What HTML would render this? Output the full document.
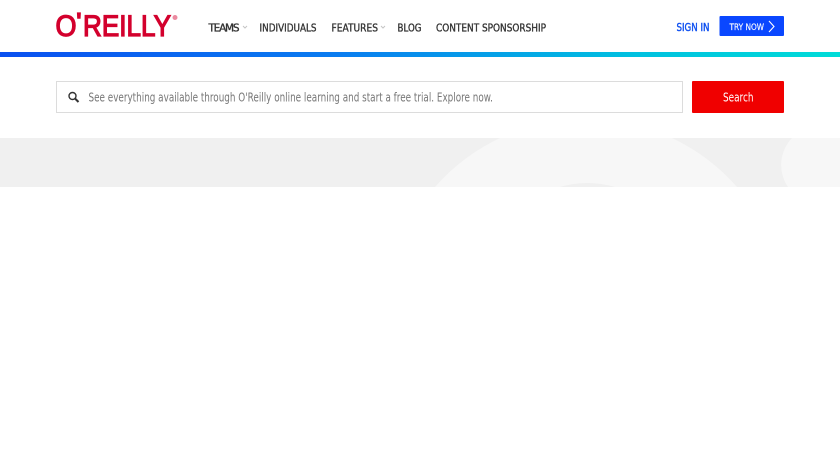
<!DOCTYPE html>
<html><head><meta charset="utf-8"><style>
html,body{margin:0;padding:0;background:#fff;width:840px;height:472px;overflow:hidden}
body{position:relative;font-family:"Liberation Sans",sans-serif}
.a{position:absolute;display:block}
svg text{font-family:"DejaVu Sans",sans-serif}
.n{font-size:10.500px;fill:#333;stroke:#333;stroke-width:.35px}
</style></head><body>
<svg class="a" style="left:0;top:0" width="840" height="50">
<text y="36" font-size="30" fill="#d3002d" stroke="#d3002d" stroke-width="1.300" style="font-family:'Liberation Sans',sans-serif"><tspan x="55.500" textLength="21" lengthAdjust="spacingAndGlyphs">O</tspan><tspan x="76.500" y="27" font-size="20" font-weight="700">'</tspan><tspan x="83" y="36" textLength="88" lengthAdjust="spacingAndGlyphs">REILLY</tspan></text>
<circle cx="175" cy="17.500" r="2.500" fill="#eb8aa0"/>
<text class="n" x="208.500" y="31.500" textLength="31" lengthAdjust="spacing">TEAMS</text>
<path d="M243 26 245 28 247 26" fill="none" stroke="#c4c4c4"/>
<text class="n" x="259.500" y="31.500" textLength="57" lengthAdjust="spacingAndGlyphs">INDIVIDUALS</text>
<text class="n" x="331.500" y="31.500" textLength="46.500" lengthAdjust="spacingAndGlyphs">FEATURES</text>
<path d="M381 26 383 28 385 26" fill="none" stroke="#c4c4c4"/>
<text class="n" x="397.500" y="31.500" textLength="24" lengthAdjust="spacingAndGlyphs">BLOG</text>
<text class="n" x="436" y="31.500" textLength="110" lengthAdjust="spacingAndGlyphs">CONTENT SPONSORSHIP</text>
<text x="676.500" y="31" font-size="10.500" fill="#0d4ff0" stroke="#0d4ff0" stroke-width=".4" textLength="33" lengthAdjust="spacingAndGlyphs">SIGN IN</text>
<rect x="719.500" y="16" width="64.500" height="20" rx="1" fill="#0a47ff"/>
<text x="729.500" y="30" font-size="8.500" fill="#fff" stroke="#fff" stroke-width=".15" textLength="34.500" lengthAdjust="spacingAndGlyphs">TRY NOW</text>
<path d="M769 21 774 26.500 769 32" fill="none" stroke="#fff" stroke-width="1.100"/>
</svg>
<div class="a" style="left:0;top:52px;width:840px;height:5px;background:linear-gradient(90deg,#0a50f0 0%,#0a7cf0 40%,#00c0e0 75%,#00dcd8 100%)"></div>
<div class="a" style="left:56px;top:81px;width:625px;height:30px;border:1px solid #dcdcdc;background:#fff"></div>
<svg class="a" style="left:0;top:81px" width="840" height="32">
<circle cx="72.500" cy="15" r="3.500" fill="none" stroke="#333" stroke-width="1.400"/><path d="M75 17.500 78.500 21" stroke="#333" stroke-width="2"/>
<text x="88.500" y="20.500" font-size="12" fill="#777" textLength="404.500" lengthAdjust="spacingAndGlyphs">See everything available through O'Reilly online learning and start a free trial. Explore now.</text>
<rect x="692" y="0" width="92" height="32" rx="1" fill="#f00000"/>
<text x="723" y="20.500" font-size="12" fill="#fff" textLength="30.500" lengthAdjust="spacingAndGlyphs">Search</text>
</svg>
<svg class="a" style="left:0;top:138px" width="840" height="49"><rect width="840" height="49" fill="#f0f0f0"/><path d="M500 0H672A201 201 0 0 1 737 49H435A201 201 0 0 1 500 0Z" fill="#f7f7f7"/><path d="M560 49Q587 41 615 49Z" fill="#f0f0f0"/><path d="M791 0A39 39 0 0 0 787 49H840V0Z" fill="#f7f7f7" transform="translate(1 0)"/></svg>
</body></html>
